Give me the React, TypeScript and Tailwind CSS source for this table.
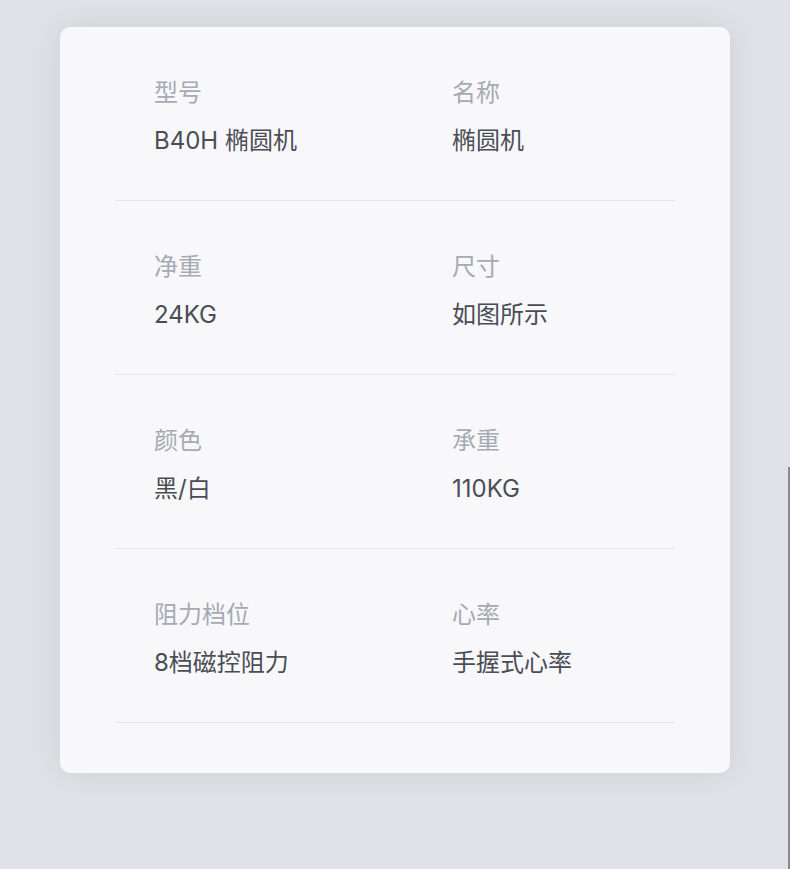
const rows = [
  [
    { label: '型号', value: 'B40H 椭圆机' },
    { label: '名称', value: '椭圆机' },
  ],
  [
    { label: '净重', value: '24KG' },
    { label: '尺寸', value: '如图所示' },
  ],
  [
    { label: '颜色', value: '黑/白' },
    { label: '承重', value: '110KG' },
  ],
  [
    { label: '阻力档位', value: '8档磁控阻力' },
    { label: '心率', value: '手握式心率' },
  ],
];

function Spec({ label, value }: { label: string; value: string }) {
  return (
    <div className="flex flex-col">
      <span className="text-[24px] leading-[36px] text-[#a6aab2]">{label}</span>
      <span className="mt-[12px] text-[24px] leading-[36px] text-[#4a4d56]">{value}</span>
    </div>
  );
}

export default function App() {
  return (
    <div
      className="relative min-h-screen bg-[#dfe2e6] pl-[60px] pt-[27px]"
      style={{ fontFamily: 'Inter, "Noto Sans CJK SC", sans-serif' }}
    >
      <div className="w-[670px] rounded-[10px] bg-[#f8f8fa] px-[55px] pb-[50px] shadow-[0_0_30px_rgba(120,130,145,0.18)]">
        {rows.map((row, i) => (
          <div key={i} className="flex h-[174px] border-b border-[#e3e5e9] pt-[48px]">
            <div className="w-[337px] pl-[39px]">
              <Spec {...row[0]} />
            </div>
            <div className="flex-1">
              <Spec {...row[1]} />
            </div>
          </div>
        ))}
      </div>
      <div className="absolute bottom-0 right-0 top-[467px] w-[2px] bg-[#868a91]" />
    </div>
  );
}
